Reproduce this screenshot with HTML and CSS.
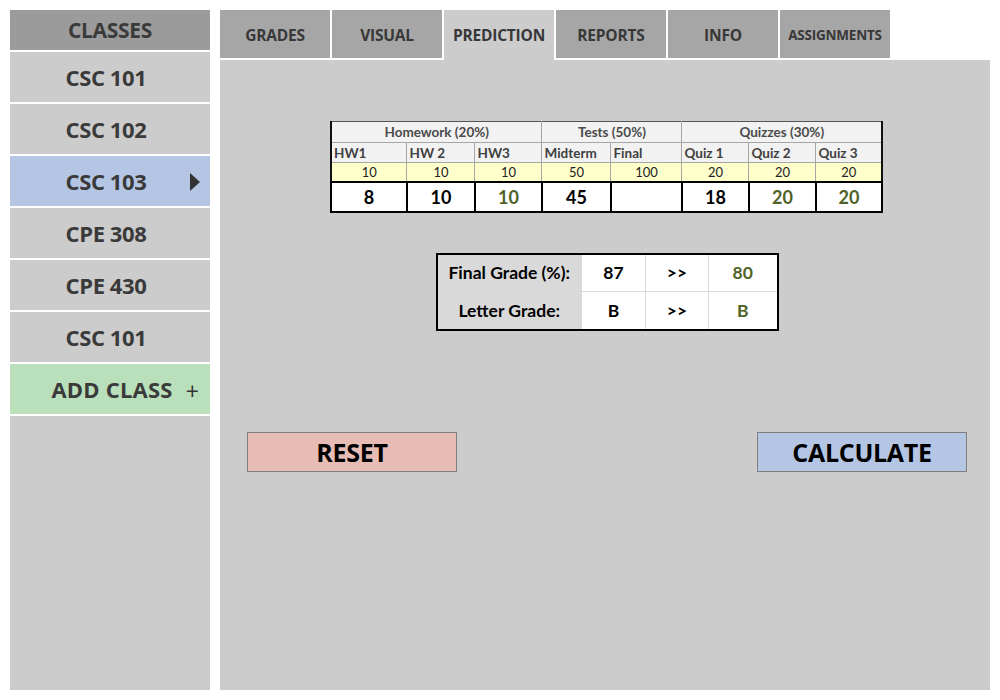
FILE: index.html
```html
<!DOCTYPE html>
<html>
<head>
<meta charset="utf-8">
<link rel="stylesheet" href="styles.css">
</head>
<body>
<div class="app">
  <aside class="sidebar">
    <div class="side-head">CLASSES</div>
    <div class="side-item">CSC 101</div>
    <div class="side-item">CSC 102</div>
    <div class="side-item active">CSC 103<span class="arrow"></span></div>
    <div class="side-item">CPE 308</div>
    <div class="side-item">CPE 430</div>
    <div class="side-item">CSC 101</div>
    <div class="side-item add">ADD CLASS<span class="plus">+</span></div>
    <div class="side-fill"></div>
  </aside>
  <main class="main">
    <nav class="tabs">
      <div class="tab">GRADES</div>
      <div class="tab">VISUAL</div>
      <div class="tab current">PREDICTION</div>
      <div class="tab">REPORTS</div>
      <div class="tab">INFO</div>
      <div class="tab small">ASSIGNMENTS</div>
    </nav>
    <section class="content">
      <table class="grades">
        <colgroup>
          <col class="c1"><col class="c2"><col class="c3"><col class="c4"><col class="c5"><col class="c6"><col class="c7"><col class="c8">
        </colgroup>
        <tr class="group">
          <th colspan="3">Homework (20%)</th>
          <th colspan="2">Tests (50%)</th>
          <th colspan="3">Quizzes (30%)</th>
        </tr>
        <tr class="names">
          <th>HW1</th><th>HW 2</th><th>HW3</th><th>Midterm</th><th>Final</th><th>Quiz 1</th><th>Quiz 2</th><th>Quiz 3</th>
        </tr>
        <tr class="max">
          <td>10</td><td>10</td><td>10</td><td>50</td><td>100</td><td>20</td><td>20</td><td>20</td>
        </tr>
        <tr class="scores">
          <td>8</td><td>10</td><td class="pred">10</td><td>45</td><td></td><td>18</td><td class="pred">20</td><td class="pred">20</td>
        </tr>
      </table>
      <table class="result">
        <colgroup><col class="r1"><col class="r2"><col class="r3"><col class="r4"></colgroup>
        <tr>
          <th>Final Grade (%):</th><td>87</td><td>&gt;&gt;</td><td class="pred">80</td>
        </tr>
        <tr>
          <th>Letter Grade:</th><td>B</td><td>&gt;&gt;</td><td class="pred">B</td>
        </tr>
      </table>
      <div class="buttons">
        <button class="btn reset">RESET</button>
        <button class="btn calc">CALCULATE</button>
      </div>
    </section>
  </main>
</div>
</body>
</html>
```

FILE: styles.css
```css
* { box-sizing: border-box; }
html, body { margin: 0; padding: 0; background: #fff; }
body { width: 1000px; height: 700px; overflow: hidden; }

.app {
  display: flex;
  gap: 10px;
  padding: 10px;
  height: 700px;
  font-family: "Open Sans", "DejaVu Sans", sans-serif;
}

.sidebar {
  width: 200px;
  display: flex;
  flex-direction: column;
  gap: 2px;
}
.side-head {
  height: 40px;
  background: #9b9b9b;
  color: #3a3a3a;
  font-weight: 700;
  font-size: 21px;
  display: flex;
  align-items: center;
  justify-content: center;
  letter-spacing: -0.3px;
}
.side-item {
  position: relative;
  height: 50px;
  background: #cccccc;
  color: #3a3a3a;
  font-weight: 700;
  font-size: 22px;
  display: flex;
  align-items: center;
  justify-content: center;
  padding-right: 8px;
  letter-spacing: -0.4px;
}
.side-item.active { background: #b4c6e4; }
.side-item.add {
  background: #b9dfbb;
  padding-right: 0;
  padding-left: 4px;
  letter-spacing: 0.2px;
}
.arrow {
  position: absolute;
  right: 10px;
  top: 17px;
  width: 0; height: 0;
  border-top: 9px solid transparent;
  border-bottom: 9px solid transparent;
  border-left: 10px solid #333;
}
.plus {
  position: absolute;
  right: 11px;
  top: 11px;
  font-weight: 400;
  font-size: 23px;
  color: #333;
}
.side-fill { flex: 1; background: #cccccc; }

.main {
  width: 770px;
  display: flex;
  flex-direction: column;
}
.tabs {
  display: flex;
  gap: 2px;
  height: 50px;
  align-items: flex-start;
}
.tab {
  width: 110px;
  height: 48px;
  background: #a6a6a6;
  color: #383838;
  font-weight: 700;
  font-size: 15.5px;
  display: flex;
  align-items: center;
  justify-content: center;
  letter-spacing: -0.2px;
  padding-top: 2px;
}
.tab.current { background: #cccccc; height: 50px; padding-bottom: 2px; }
.tab.small { font-size: 13.5px; }

.content {
  flex: 1;
  background: #cccccc;
  display: flex;
  flex-direction: column;
  align-items: center;
  padding-top: 61px;
}

.grades {
  border-collapse: collapse;
  font-family: Lato, "Liberation Sans", sans-serif;
  table-layout: fixed;
  width: 552px;
  border: 2px solid #111;
  border-top: 1px solid #555;
  margin-left: 3px;
}
.c1 { width: 76px; } .c2 { width: 68px; } .c3 { width: 67px; } .c4 { width: 69px; }
.c5 { width: 71px; } .c6 { width: 67px; } .c7 { width: 67px; } .c8 { width: 66px; }
.grades th, .grades td { padding: 0 2px; }
.grades .group th {
  height: 21px;
  background: #f2f2f2;
  color: #4a4a4a;
  font-size: 13.5px;
  font-weight: 700;
  text-align: center;
  border: 1px solid #a6a6a6;
  border-top: none;
}
.grades .names th {
  height: 20px;
  background: #f2f2f2;
  color: #404040;
  font-size: 13.5px;
  font-weight: 700;
  text-align: left;
  border: 1px solid #a6a6a6;
  white-space: nowrap;
}
.grades .max td {
  height: 19px;
  background: #ffffcc;
  color: #222;
  font-size: 13px;
  text-align: center;
  border-left: 1px solid #a6a6a6;
  border-right: 1px solid #a6a6a6;
}
.grades .scores td {
  height: 30px;
  background: #fff;
  color: #000;
  font-size: 18px;
  font-weight: 700;
  text-align: center;
  border: 2px solid #000;
}
.grades .scores td.pred, .result td.pred { color: #4f6228; }

.result {
  margin-top: 40px;
  margin-left: 4px;
  border-collapse: collapse;
  table-layout: fixed;
  width: 341px;
  font-family: Lato, "Liberation Sans", sans-serif;
  font-weight: 700;
  font-size: 17.5px;
  border: 2px solid #000;
}
.r1 { width: 145px; } .r2 { width: 64px; } .r3 { width: 63px; } .r4 { width: 69px; }
.result th {
  height: 38px;
  background: #d9d9d9;
  color: #000;
  text-align: center;
  font-weight: 700;
  border-bottom: 1px solid #d9d9d9;
  white-space: nowrap;
}
.result td {
  height: 38px;
  background: #fff;
  text-align: center;
  border: 1px solid #d9d9d9;
  color: #000;
}

.buttons {
  width: 100%;
  margin-top: 101px;
  display: flex;
  justify-content: space-between;
  padding: 0 23px 0 27px;
}
.btn {
  width: 210px;
  height: 40px;
  border: 1px solid #7f7f7f;
  font-family: "Open Sans", "DejaVu Sans", sans-serif;
  font-weight: 700;
  font-size: 25px;
  color: #000;
  padding: 0;
  letter-spacing: -0.3px;
}
.btn.reset { background: #e6bcb5; }
.btn.calc { background: #b4c6e4; }
```
